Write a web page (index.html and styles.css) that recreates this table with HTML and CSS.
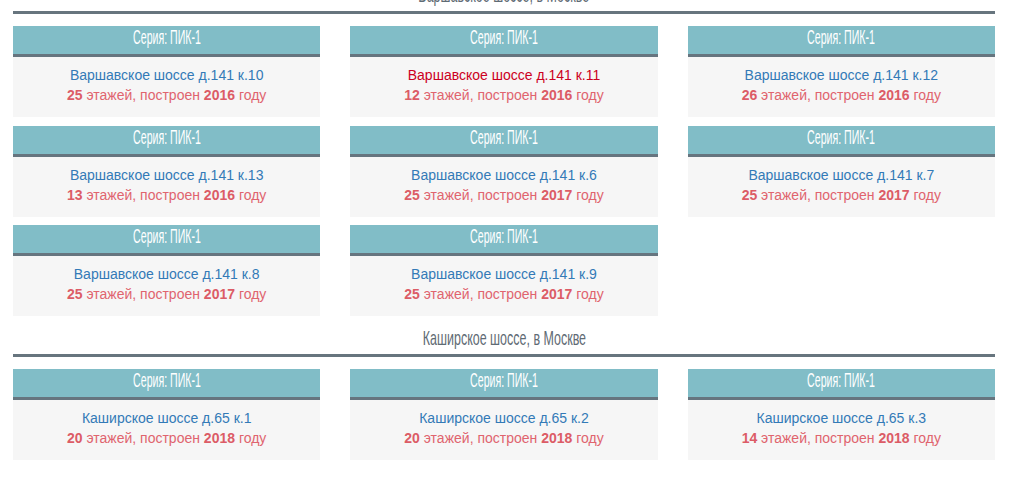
FILE: index.html
```html
<!DOCTYPE html>
<html lang="ru">
<head>
<meta charset="utf-8">
<title>Дома серии ПИК-1</title>
<link rel="stylesheet" href="styles.css">
</head>
<body>
<div class="page">
  <section class="street street-first">
    <h2 class="street-title"><span class="cond cond-title">Варшавское шоссе, в Москве</span></h2>
    <div class="grid">
      <div class="card"><div class="card-head"><span class="cond">Серия: ПИК-1</span></div><div class="card-body"><a class="addr" href="#">Варшавское шоссе д.141 к.10</a><div class="info"><b>25</b> этажей, построен <b>2016</b> году</div></div></div>
      <div class="card"><div class="card-head"><span class="cond">Серия: ПИК-1</span></div><div class="card-body"><a class="addr addr-active" href="#">Варшавское шоссе д.141 к.11</a><div class="info"><b>12</b> этажей, построен <b>2016</b> году</div></div></div>
      <div class="card"><div class="card-head"><span class="cond">Серия: ПИК-1</span></div><div class="card-body"><a class="addr" href="#">Варшавское шоссе д.141 к.12</a><div class="info"><b>26</b> этажей, построен <b>2016</b> году</div></div></div>
      <div class="card"><div class="card-head"><span class="cond">Серия: ПИК-1</span></div><div class="card-body"><a class="addr" href="#">Варшавское шоссе д.141 к.13</a><div class="info"><b>13</b> этажей, построен <b>2016</b> году</div></div></div>
      <div class="card"><div class="card-head"><span class="cond">Серия: ПИК-1</span></div><div class="card-body"><a class="addr" href="#">Варшавское шоссе д.141 к.6</a><div class="info"><b>25</b> этажей, построен <b>2017</b> году</div></div></div>
      <div class="card"><div class="card-head"><span class="cond">Серия: ПИК-1</span></div><div class="card-body"><a class="addr" href="#">Варшавское шоссе д.141 к.7</a><div class="info"><b>25</b> этажей, построен <b>2017</b> году</div></div></div>
      <div class="card"><div class="card-head"><span class="cond">Серия: ПИК-1</span></div><div class="card-body"><a class="addr" href="#">Варшавское шоссе д.141 к.8</a><div class="info"><b>25</b> этажей, построен <b>2017</b> году</div></div></div>
      <div class="card"><div class="card-head"><span class="cond">Серия: ПИК-1</span></div><div class="card-body"><a class="addr" href="#">Варшавское шоссе д.141 к.9</a><div class="info"><b>25</b> этажей, построен <b>2017</b> году</div></div></div>
    </div>
  </section>
  <section class="street">
    <h2 class="street-title"><span class="cond cond-title">Каширское шоссе, в Москве</span></h2>
    <div class="grid">
      <div class="card"><div class="card-head"><span class="cond">Серия: ПИК-1</span></div><div class="card-body"><a class="addr" href="#">Каширское шоссе д.65 к.1</a><div class="info"><b>20</b> этажей, построен <b>2018</b> году</div></div></div>
      <div class="card"><div class="card-head"><span class="cond">Серия: ПИК-1</span></div><div class="card-body"><a class="addr" href="#">Каширское шоссе д.65 к.2</a><div class="info"><b>20</b> этажей, построен <b>2018</b> году</div></div></div>
      <div class="card"><div class="card-head"><span class="cond">Серия: ПИК-1</span></div><div class="card-body"><a class="addr" href="#">Каширское шоссе д.65 к.3</a><div class="info"><b>14</b> этажей, построен <b>2018</b> году</div></div></div>
    </div>
  </section>
</div>
</body>
</html>
```

FILE: styles.css
```css
html, body {
  margin: 0;
  padding: 0;
  background: #ffffff;
  font-family: "Liberation Sans", Arial, sans-serif;
  font-size: 14px;
  line-height: 20px;
}

.page {
  width: 982px;
  margin-left: 13px;
}

.street {
  margin-top: 10px;
}

.street-first {
  margin-top: -17px;
}

.cond {
  display: inline-block;
  transform: scaleX(0.53);
  transform-origin: center;
  white-space: nowrap;
}

.cond-title {
  transform: scaleX(0.594);
}

.street-title {
  margin: 0 0 12px 0;
  padding: 0 0 4px 0;
  text-align: center;
  font-family: "Liberation Sans", Arial, sans-serif;
  font-weight: normal;
  font-size: 21px;
  line-height: 24px;
  color: #5f6b74;
  border-bottom: 3px solid #67757e;
}

.grid {
  display: grid;
  grid-template-columns: repeat(3, 1fr);
  column-gap: 30px;
  row-gap: 8.5px;
}

.card {
  background: #f6f6f6;
}

.card-head {
  height: 28px;
  background: #81bdc7;
  border-bottom: 3px solid #66757f;
  color: #ffffff;
  text-align: center;
  font-size: 20px;
  line-height: 22px;
}

.card-body {
  padding: 8px 0 12px;
  text-align: center;
  height: 40px;
}

.addr {
  display: block;
  color: #337ab7;
  text-decoration: none;
}

.addr-active {
  color: #cc0022;
}

.info {
  color: #e0646e;
}

.info b {
  color: #dc5c66;
}
```
